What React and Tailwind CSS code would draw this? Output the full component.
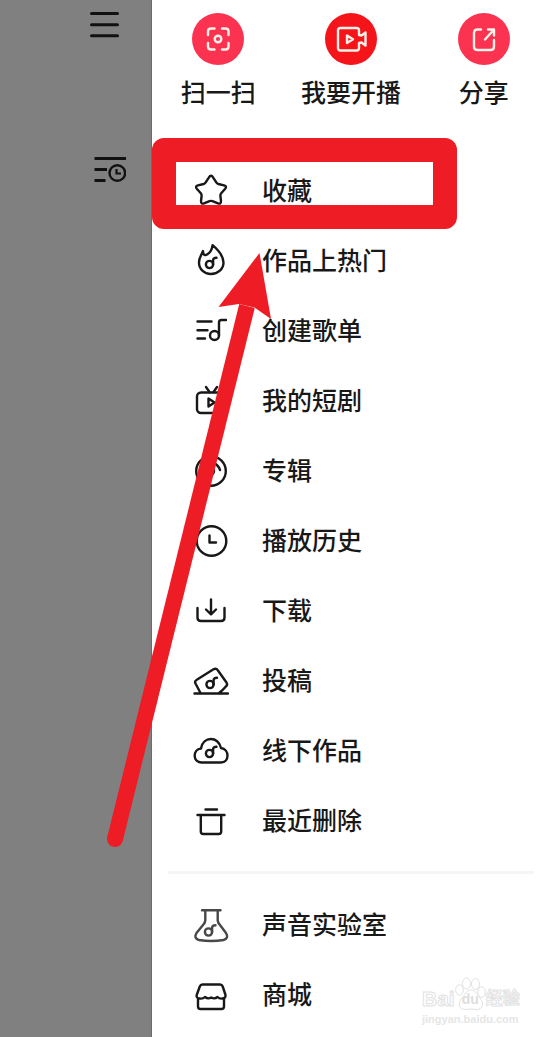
import clsx from 'clsx';

function Icon({ children, className }) {
  return (
    <svg
      viewBox="0 0 36 36"
      fill="none"
      stroke="currentColor"
      strokeWidth="2.4"
      strokeLinecap="round"
      strokeLinejoin="round"
      className={clsx('h-9 w-9 shrink-0', className)}
      aria-hidden="true"
    >
      {children}
    </svg>
  );
}

// small music note shared by several icons, x/y is the centre of its head
function Note({ x, y }) {
  return (
    <g transform={`translate(${x} ${y})`}>
      <circle r="3.6" />
      <path d="M3.6 0V-4.500Q3.800-6.600 7-6.800" />
    </g>
  );
}

const actions = [
  {
    label: '扫一扫',
    color: 'bg-[#fb3350]',
    icon: (
      <>
        <path d="M16 22V18.500Q16 15.500 19 15.500H22.500M30 15.500H33.500Q36.500 15.500 36.500 18.500V22M36.500 30V33.500Q36.500 36.500 33.500 36.500H30M22.500 36.500H19Q16 36.500 16 33.500V30" />
        <circle cx="26" cy="26" r="3.3" />
      </>
    )
  },
  {
    label: '我要开播',
    color: 'bg-[#f5141a]',
    icon: (
      <>
        <path d="M34 22V17.500Q34 15 31.500 15H15.500Q13 15 13 17.500V35Q13 37.500 15.500 37.500H31.500Q34 37.500 34 35V30L36.500 29.500L40.500 32.500V19.500L36.500 22.500Z" />
        <path d="M22 22.500V30L28 26.300Z" />
      </>
    )
  },
  {
    label: '分享',
    color: 'bg-[#fb3350]',
    icon: (
      <>
        <path d="M23 16.500H19.500Q16 16.500 16 20V33.500Q16 37 19.500 37H32.500Q36 37 36 33.500V27" />
        <path d="M27 26.500L35.500 17M30 16.500H36V22.500" />
      </>
    )
  }
];

const menuItems = [
  {
    label: '收藏',
    marked: true,
    icon: (
      <path d="M15.800 4.600Q18 1 20.200 4.600L23.300 9.400Q24 10.600 25.400 11L31 12.400Q34.400 13.300 32 16L28.200 20.200Q27.200 21.400 27.400 23L28 28Q28 31.500 25 30.400L19.500 28.200Q18 27.600 16.500 28.200L11 30.400Q8 31.500 8 28L8.600 23Q8.800 21.400 7.800 20.200L4 16Q1.600 13.300 5 12.400L10.600 11Q12 10.600 12.700 9.400Z" />
    )
  },
  {
    label: '作品上热门',
    icon: (
      <>
        <path d="M10 8C10 11 11 12.500 13 12C17 10.500 19 7 19.600 2.200C24 6 30.500 12 30.500 19.500C30.500 26 25 31 18 31C11 31 6 26 6 19.500C6 14.500 8.500 12 10 8Z" />
        <Note x={16.5} y={21.5} />
      </>
    )
  },
  {
    label: '创建歌单',
    icon: (
      <>
        <path d="M4.500 8.500H18.500M4.500 17.300H14.500M4.500 25.500H12" />
        <circle cx="21.500" cy="22.500" r="4.500" />
        <path d="M26 22.500V9.500Q26 7 28.500 7H33" />
      </>
    )
  },
  {
    label: '我的短剧',
    icon: (
      <>
        <rect x="4" y="9.500" width="28" height="20.500" rx="4" />
        <path d="M13 4L16.500 9M24 4L20.500 9M15.500 15.500V23.500L21.500 19.500Z" />
      </>
    )
  },
  {
    label: '专辑',
    icon: (
      <>
        <circle cx="18" cy="18" r="14.800" />
        <circle cx="17" cy="18" r="4" />
        <path d="M21 10.500Q25.500 12 27 17" />
      </>
    )
  },
  {
    label: '播放历史',
    icon: (
      <>
        <circle cx="18.500" cy="18" r="14.800" />
        <path d="M16.500 12.500V19.500H23" />
      </>
    )
  },
  {
    label: '下载',
    icon: (
      <>
        <path d="M4.500 15V24.500Q4.500 28 8 28H28Q31.500 28 31.500 24.500V15" />
        <path d="M18 6.500V21M13 16.500L18 21.300L23 16.500" />
      </>
    )
  },
  {
    label: '投稿',
    icon: (
      <>
        <path d="M1.500 30.500H35M7.500 30L2.500 20.500Q1.300 18 3.800 16.700L20.500 6.200Q23.200 4.800 24.800 7.200L33.500 19.500Q35 22 32.600 23.700Q29.500 27.500 26 30" />
        <Note x={17} y={21.5} />
      </>
    )
  },
  {
    label: '线下作品',
    icon: (
      <>
        <path d="M8.500 29.500C-.500 29.500-.500 16.500 8 15.500C10 3 25.500 3 28 15C36.500 16 37 29.500 27.500 29.500Z" />
        <Note x={16.5} y={20.5} />
      </>
    )
  },
  {
    label: '最近删除',
    icon: <path d="M12.500 6.500H24M4.500 12H31.500M7.800 12V28.500Q7.800 31 10.300 31H25.700Q28.200 31 28.200 28.500V12" />
  }
];

const moreItems = [
  {
    label: '声音实验室',
    soft: true,
    icon: (
      <>
        <path d="M9 3.200H27.500M12.300 3.500V13.500Q12 16 10 18L3.500 26Q.500 31.500 6 33Q18 35 30.500 33Q36 31.500 33 26L27 18Q25 16 24.700 13.500V3.500" />
        <Note x={15.5} y={25} />
      </>
    )
  },
  {
    label: '商城',
    icon: (
      <>
        <path d="M9.500 7.500H27Q29 7.500 29.700 9.500L32.500 18Q33 21 29.500 21.500Q26.500 22 24.500 20Q21.500 22.500 18.200 20.500Q15 22.500 12 20Q10 22 6.500 21.500Q3 21 3.700 18L6.800 9.500Q7.500 7.500 9.500 7.500Z" />
        <path d="M5 22V29.500Q5 32 7.500 32H28.500Q31 32 31 29.500V22" />
      </>
    )
  }
];

function MenuRow({ item }) {
  return (
    <li className="relative">
      <a href="#" className="flex h-[70px] items-center gap-[33px] pl-[41px] text-[#181818]">
        <Icon className={item.soft && 'text-[#484848]'}>{item.icon}</Icon>
        <span className="pb-1 text-[25px] leading-8 font-medium whitespace-nowrap">{item.label}</span>
      </a>
      {item.marked && (
        <div className="pointer-events-none absolute -top-[18px] left-0 h-[91px] w-[305px] rounded-xl border-24 border-[#ee1c25]" />
      )}
    </li>
  );
}

function Watermark() {
  return (
    <div className="absolute right-7 bottom-2.5 w-[100px] font-['Liberation_Sans','Noto_Sans_CJK_SC',sans-serif] font-bold text-white [-webkit-text-stroke:1px_#e2e2e2]">
      <div className="flex h-[34px] items-end">
        <span className="text-[21px] leading-6">Bai</span>
        <span className="relative h-[34px] w-[31px] shrink-0">
          <svg viewBox="0 0 31 34" fill="#fff" stroke="#e2e2e2" className="h-full w-full" aria-hidden="true">
            <ellipse cx="4.500" cy="13" rx="3.800" ry="5.300" />
            <ellipse cx="11.500" cy="6.500" rx="4" ry="5.500" />
            <ellipse cx="20.500" cy="7" rx="4" ry="5.500" />
            <ellipse cx="26.500" cy="15" rx="3.800" ry="5.300" />
            <path d="M16 13C20 13 22 17 25 21C30 27 27 33 21 32.500Q16 31.500 11 32.500C4 33 2 27 7 21C10 18 11 13 16 13Z" />
          </svg>
          <span className="absolute inset-x-0 bottom-1 text-center text-[14px] leading-4 text-[#dedede] [-webkit-text-stroke:0]">
            du
          </span>
        </span>
        <span className="text-[17px] leading-6 whitespace-nowrap">经验</span>
      </div>
      <p className="text-[11px] leading-4 text-[#e6e6e6] [-webkit-text-stroke:0]">jingyan.baidu.com</p>
    </div>
  );
}

function App() {
  return (
    <div
      lang="zh-CN"
      className="relative flex min-h-screen overflow-hidden bg-white font-['Noto_Sans_CJK_SC',sans-serif]"
    >
      <aside className="flex w-[152px] shrink-0 flex-col gap-[115px] border-r border-[#6c6c6c] bg-[#808080] pt-[11px] pl-[90px] text-[#111]">
        <button type="button" aria-label="菜单" className="h-7 w-9">
          <svg viewBox="0 0 36 28" stroke="currentColor" strokeWidth="3" strokeLinecap="round" className="h-7 w-9">
            <path d="M1.500 2.500H27.500M1.500 13.700H27.500M1.500 24.700H27.500" />
          </svg>
        </button>
        <button type="button" aria-label="播放列表" className="h-9 w-9">
          <svg viewBox="0 0 36 36" fill="none" stroke="currentColor" strokeWidth="3" className="h-9 w-9">
            <path d="M4.500 4.500H36M4.500 15.500H17M4.500 26.500H15.500" />
            <circle cx="27.300" cy="19" r="7.800" strokeWidth="2.400" />
            <path d="M26.500 15V19.500H31" strokeWidth="2.200" />
          </svg>
        </button>
      </aside>

      <main className="min-w-0 flex-1 pb-[7px]">
        <div className="grid grid-cols-3 pt-[13px]">
          {actions.map((action) => (
            <button key={action.label} type="button" className="flex flex-col items-center gap-2.5">
              <span className={clsx('rounded-full text-[#fff0e8]', action.color)}>
                <svg
                  viewBox="0 0 52 52"
                  fill="none"
                  stroke="currentColor"
                  strokeWidth="2.4"
                  strokeLinecap="round"
                  strokeLinejoin="round"
                  className="h-[52px] w-[52px]"
                  aria-hidden="true"
                >
                  {action.icon}
                </svg>
              </span>
              <span className="text-[25px] leading-8 font-medium whitespace-nowrap text-[#181818]">{action.label}</span>
            </button>
          ))}
        </div>

        <ul className="mt-[49px]">
          {menuItems.map((item) => (
            <MenuRow key={item.label} item={item} />
          ))}
        </ul>
        <hr className="mx-4 mt-[15px] mb-4 h-[3px] border-0 bg-[#f5f5f5]" />
        <ul>
          {moreItems.map((item) => (
            <MenuRow key={item.label} item={item} />
          ))}
        </ul>
      </main>

      <svg
        viewBox="0 0 170 600"
        fill="#ee1c25"
        className="pointer-events-none absolute top-[250px] left-[105px] h-[600px] w-[170px]"
        aria-hidden="true"
      >
        <path d="M10 589L142 56" stroke="#ee1c25" strokeWidth="16" />
        <circle cx="10" cy="589" r="8" />
        <path d="M154.500 3L113.500 57L134 54L149.500 57.500L166 69Z" />
      </svg>

      <Watermark />
    </div>
  );
}

export default App;
